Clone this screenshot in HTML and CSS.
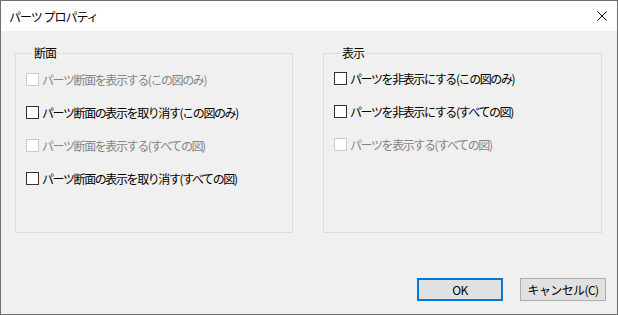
FILE: index.html
```html
<!DOCTYPE html>
<html lang="ja">
<head>
    <meta charset="UTF-8">
    <title>パーツ プロパティ</title>
    <link rel="stylesheet" href="styles.css">
</head>
<body>
    <div class="dialog">
        <div class="titlebar">
            <span class="title">パーツ プロパティ</span>
            <svg class="close" width="10" height="10" viewBox="0 0 10 10">
                <path d="M0.5 0.5 L9.5 9.5 M9.5 0.5 L0.5 9.5" stroke="#000" stroke-width="1" fill="none"/>
            </svg>
        </div>

        <div class="content">
            <div class="groups">
                <fieldset class="group section">
                    <legend>断面</legend>
                    <label class="check disabled"><span class="box"></span>パーツ断面を表示する(この図のみ)</label>
                    <label class="check"><span class="box"></span>パーツ断面の表示を取り消す(この図のみ)</label>
                    <label class="check disabled"><span class="box"></span>パーツ断面を表示する(すべての図)</label>
                    <label class="check"><span class="box"></span>パーツ断面の表示を取り消す(すべての図)</label>
                </fieldset>

                <fieldset class="group visibility">
                    <legend>表示</legend>
                    <label class="check"><span class="box"></span>パーツを非表示にする(この図のみ)</label>
                    <label class="check"><span class="box"></span>パーツを非表示にする(すべての図)</label>
                    <label class="check disabled"><span class="box"></span>パーツを表示する(すべての図)</label>
                </fieldset>
            </div>

            <div class="buttons">
                <button class="btn default">OK</button>
                <button class="btn">キャンセル(C)</button>
            </div>
        </div>
    </div>
</body>
</html>
```

FILE: styles.css
```css
* {
    box-sizing: border-box;
}

body {
    margin: 0;
    font-family: "Noto Sans CJK JP", "Noto Sans", sans-serif;
    font-size: 12px;
    color: #000;
}

.dialog {
    width: 618px;
    height: 315px;
    border: 1px solid #6e6e6e;
    background: #f0f0f0;
    display: flex;
    flex-direction: column;
}

.titlebar {
    height: 30px;
    background: #fff;
    display: flex;
    align-items: center;
    justify-content: space-between;
    padding: 0 10px 0 8px;
}

.title {
    font-size: 12px;
    letter-spacing: -1px;
}

.content {
    flex: 1;
    display: flex;
    flex-direction: column;
    padding: 14px 11px 13px 14px;
}

.groups {
    display: flex;
    gap: 30px;
}

.group {
    height: 188px;
    margin: 0;
    padding: 9px 10px 0;
    border: 1px solid #dcdcdc;
    display: flex;
    flex-direction: column;
    gap: 14px;
}

.section {
    width: 278px;
}

.visibility {
    width: 279px;
    padding-top: 8px;
}

legend {
    margin-left: 6px;
    padding: 0 2px;
    line-height: 16px;
    letter-spacing: -1px;
}

.check {
    display: flex;
    align-items: center;
    height: 19px;
    gap: 3px;
    letter-spacing: -1.4px;
    white-space: nowrap;
}

.box {
    width: 13px;
    height: 13px;
    border: 1px solid #333;
    background: #fff;
    flex-shrink: 0;
}

.check.disabled {
    color: #858585;
}

.check.disabled .box {
    border-color: #cccccc;
}

.buttons {
    margin-top: auto;
    display: flex;
    justify-content: flex-end;
    gap: 17px;
}

.btn {
    width: 86px;
    height: 23px;
    background: #e1e1e1;
    border: 1px solid #adadad;
    font-family: inherit;
    font-size: 12px;
    letter-spacing: -0.6px;
    padding: 0;
    color: #000;
}

.btn.default {
    border: 2px solid #0078d7;
}
```
